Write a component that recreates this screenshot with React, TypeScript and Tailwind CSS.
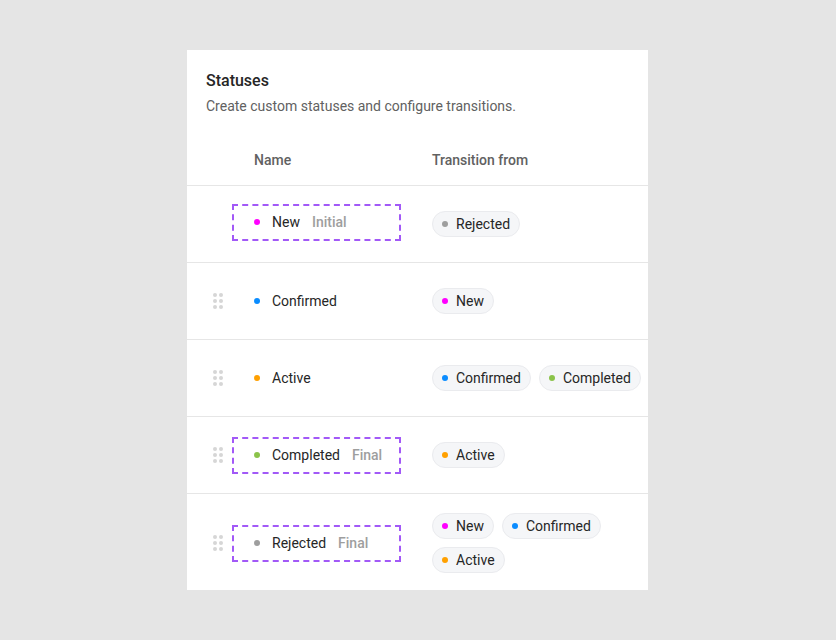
import React from 'react'

type Status = {
  name: string
  color: string
  tag?: 'Initial' | 'Final'
  draggable: boolean
  from: string[]
}

const dotColors: Record<string, string> = {
  New: 'bg-[#ff00ff]',
  Confirmed: 'bg-[#0a8cff]',
  Active: 'bg-[#ffa000]',
  Completed: 'bg-[#8bc34a]',
  Rejected: 'bg-[#9e9e9e]',
}

const statuses: Status[] = [
  { name: 'New', color: dotColors.New, tag: 'Initial', draggable: false, from: ['Rejected'] },
  { name: 'Confirmed', color: dotColors.Confirmed, draggable: true, from: ['New'] },
  { name: 'Active', color: dotColors.Active, draggable: true, from: ['Confirmed', 'Completed'] },
  { name: 'Completed', color: dotColors.Completed, tag: 'Final', draggable: true, from: ['Active'] },
  { name: 'Rejected', color: dotColors.Rejected, tag: 'Final', draggable: true, from: ['New', 'Confirmed', 'Active'] },
]

function DragHandle() {
  return (
    <div className="ml-[6px] grid grid-cols-2 gap-x-[2px] gap-y-[2px]">
      {Array.from({ length: 6 }).map((_, i) => (
        <span key={i} className="block h-[4px] w-[4px] rounded-full bg-[#d6d6d6]" />
      ))}
    </div>
  )
}

function Pill({ label }: { label: string }) {
  return (
    <span className="flex h-[26px] items-center gap-2 rounded-full border border-[#eaebee] bg-[#f5f6f8] px-[9px] text-[14px] text-[#262626]">
      <span className={`h-[6px] w-[6px] rounded-full ${dotColors[label]}`} />
      {label}
    </span>
  )
}

function StatusRow({ status, first, last }: { status: Status; first: boolean; last: boolean }) {
  const marked = Boolean(status.tag)
  return (
    <div
      className={`flex items-center pl-5 ${
        last ? 'pb-[17px] pt-[19px]' : 'h-[77px] border-b border-[#e6e6e6]'
      }`}
    >
      <div className="flex w-[25px] items-center">{status.draggable && <DragHandle />}</div>
      <div
        className={`flex h-[37px] w-[169px] items-center border-2 border-dashed pl-5 ${
          marked ? 'border-[#a259f7]' : 'border-transparent'
        } ${first ? 'mb-[4px]' : ''}`}
      >
        <span className={`h-[6px] w-[6px] rounded-full ${status.color}`} />
        <span className="ml-3 text-[14px] text-[#262626]">{status.name}</span>
        {status.tag && (
          <span className="ml-3 text-[14px] font-medium text-[#9e9e9e]">{status.tag}</span>
        )}
      </div>
      <div className="ml-[31px] flex flex-1 flex-wrap gap-2">
        {status.from.map((f) => (
          <Pill key={f} label={f} />
        ))}
      </div>
    </div>
  )
}

export default function App() {
  return (
    <div
      className="flex h-screen w-full items-center justify-center bg-[#e5e5e5] pr-px"
      style={{ fontFamily: 'Roboto, "Noto Sans", sans-serif' }}
    >
      <div className="flex h-[540px] w-[461px] flex-col bg-white">
        <div className="px-[19px] pt-[19px]">
          <h2 className="text-[16px] font-medium leading-6 text-[#262626]">Statuses</h2>
          <p className="mt-[3px] text-[14px] leading-5 text-[#616161]">
            Create custom statuses and configure transitions.
          </p>
        </div>
        <div className="mt-[34px] flex border-b border-[#e6e6e6] pb-[15px] pl-5 text-[14px] font-medium leading-5 text-[#616161]">
          <div className="w-[25px]" />
          <div className="w-[169px] pl-[22px]">Name</div>
          <div className="ml-[31px]">Transition from</div>
        </div>
        {statuses.map((s, i) => (
          <StatusRow
            key={s.name}
            status={s}
            first={i === 0}
            last={i === statuses.length - 1}
          />
        ))}
      </div>
    </div>
  )
}
